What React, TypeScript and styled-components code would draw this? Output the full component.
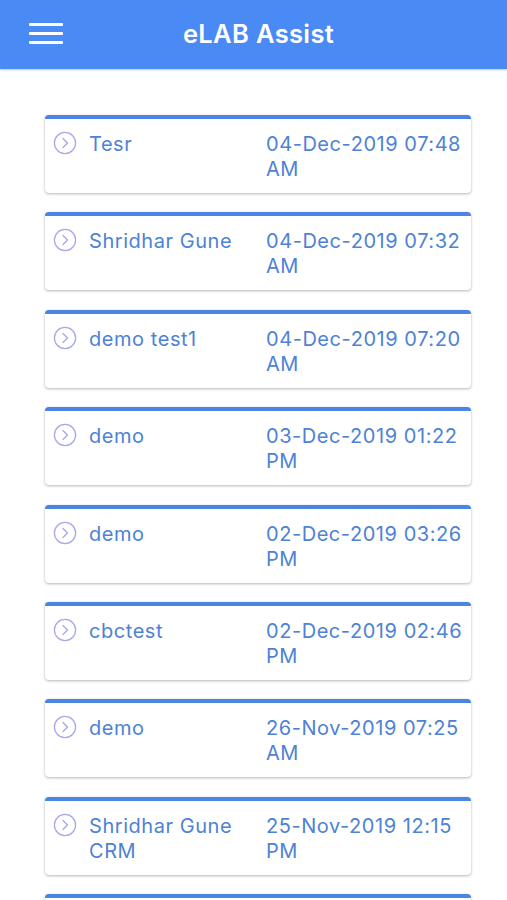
import React from "react";
import styled, { createGlobalStyle } from "styled-components";

const GlobalStyle = createGlobalStyle`
  html, body { margin: 0; padding: 0; background: #ffffff; }
  body { font-family: Inter, "Liberation Sans", Arial, sans-serif; -webkit-font-smoothing: antialiased; }
  * { box-sizing: border-box; }
`;

const Page = styled.div`
  width: 507px;
  height: 900px;
  background: #ffffff;
  overflow: hidden;
`;

const Header = styled.header`
  height: 69px;
  background: #4a8af5;
  display: flex;
  align-items: center;
  position: relative;
  box-shadow: 0 1px 2px rgba(0, 0, 0, 0.25);
`;

const MenuButton = styled.button`
  width: 34px;
  height: 21px;
  margin-left: 29px;
  margin-top: -2px;
  padding: 0;
  border: none;
  background: transparent;
  display: flex;
  flex-direction: column;
  justify-content: space-between;
`;

const MenuLine = styled.span`
  display: block;
  height: 3px;
  width: 34px;
  background: #ffffff;
  border-radius: 1px;
`;

const Title = styled.h1`
  position: absolute;
  inset: 0;
  margin: 0;
  padding: 0 0 3px 10px;
  display: flex;
  align-items: center;
  justify-content: center;
  color: #ffffff;
  font-size: 25.5px;
  font-weight: 600;
  letter-spacing: 0.35px;
  pointer-events: none;
`;

const List = styled.main`
  display: flex;
  flex-direction: column;
  gap: 19.4px;
  padding: 46px 36px 0 45px;
`;

const Card = styled.div`
  width: 426px;
  min-height: 78px;
  flex: none;
  background: #ffffff;
  border-top: 4px solid #4a85e4;
  border-radius: 4px;
  box-shadow: 0 1px 3px rgba(0, 0, 0, 0.28), 0 0 1px rgba(0, 0, 0, 0.12);
  display: flex;
  align-items: flex-start;
  padding: 13px 8px 9px 8px;
  color: #4d82d6;
  font-size: 20px;
  line-height: 25px;
  letter-spacing: 0.55px;
`;

const IconWrap = styled.div`
  width: 24px;
  height: 24px;
  flex: none;
  margin-top: -1px;
`;

const Name = styled.div`
  width: 189px;
  flex: none;
  padding-left: 12px;
`;

const DateText = styled.div`
  flex: 1;
`;

const ChevronCircle = () => (
  <svg width="24" height="24" viewBox="0 0 24 24" fill="none">
    <circle cx="12" cy="12" r="10.6" stroke="#aaa7e8" strokeWidth="1.3" />
    <path d="M10 7.5 L14.5 12 L10 16.5" stroke="#aaa7e8" strokeWidth="1.3" strokeLinecap="round" strokeLinejoin="round" />
  </svg>
);

const items = [
  { name: "Tesr", date: "04-Dec-2019 07:48 AM" },
  { name: "Shridhar Gune", date: "04-Dec-2019 07:32 AM" },
  { name: "demo test1", date: "04-Dec-2019 07:20 AM" },
  { name: "demo", date: "03-Dec-2019 01:22 PM" },
  { name: "demo", date: "02-Dec-2019 03:26 PM" },
  { name: "cbctest", date: "02-Dec-2019 02:46 PM" },
  { name: "demo", date: "26-Nov-2019 07:25 AM" },
  { name: "Shridhar Gune CRM", date: "25-Nov-2019 12:15 PM" },
];

export default function App() {
  return (
    <Page>
      <GlobalStyle />
      <Header>
        <MenuButton aria-label="menu">
          <MenuLine />
          <MenuLine />
          <MenuLine />
        </MenuButton>
        <Title>eLAB Assist</Title>
      </Header>
      <List>
        {items.map((it, i) => (
          <Card key={i}>
            <IconWrap>
              <ChevronCircle />
            </IconWrap>
            <Name>{it.name}</Name>
            <DateText>{it.date}</DateText>
          </Card>
        ))}
        <Card aria-hidden="true" />
      </List>
    </Page>
  );
}
